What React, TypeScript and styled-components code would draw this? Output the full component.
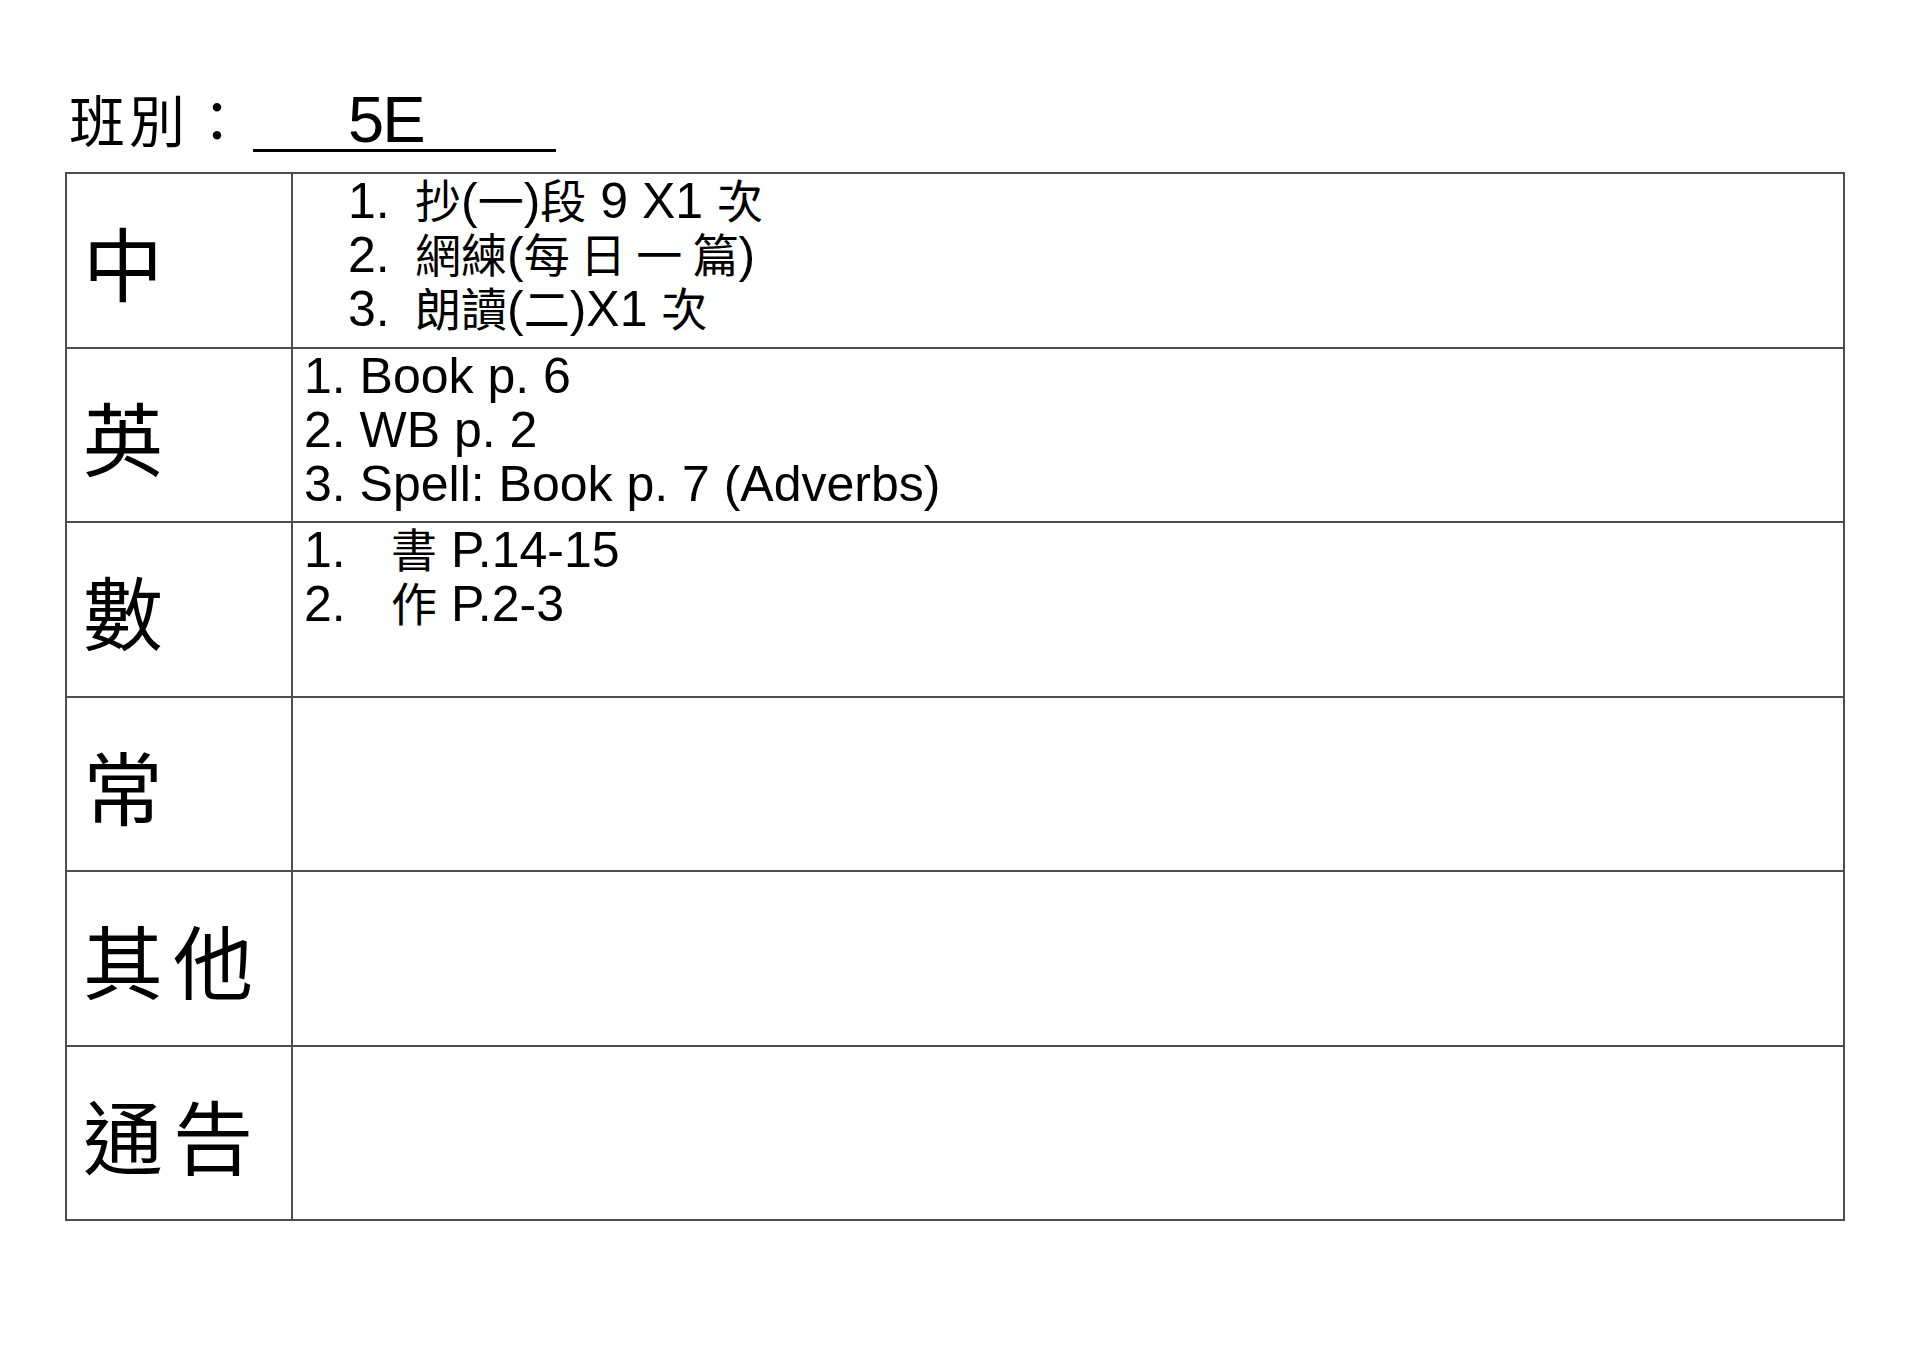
import React from "react";
import styled, { createGlobalStyle } from "styled-components";

const GlobalStyle = createGlobalStyle`
  html, body {
    margin: 0;
    padding: 0;
    background: #ffffff;
  }
  body {
    font-family: "Liberation Sans", "Noto Sans CJK TC", sans-serif;
    color: #000;
  }
  * { box-sizing: border-box; }
`;

const Page = styled.div`
  width: 1920px;
  min-height: 1358px;
  padding: 89px 0 0 65px;
  background: #fff;
`;

const Title = styled.div`
  display: flex;
  align-items: baseline;
  margin-left: 4px;
`;

const TitleLabel = styled.span`
  font-family: "Noto Sans CJK TC", "Noto Sans CJK SC", sans-serif;
  font-size: 56px;
  line-height: 57px;
  letter-spacing: 4px;
  font-weight: 400;
`;

const BlankField = styled.span`
  display: inline-block;
  width: 303px;
  margin-left: 4px;
  padding-left: 95px;
  border-bottom: 3px solid #000;
  font-family: "Liberation Sans", Arial, sans-serif;
  font-size: 65px;
  line-height: 58px;
  letter-spacing: -2px;
`;

const Sheet = styled.div`
  margin-top: 20px;
  width: 1780px;
  display: grid;
  grid-template-columns: 226px 1fr;
  grid-template-rows: repeat(6, 174.5px);
  border-top: 2px solid #4d4d4d;
  border-left: 2px solid #4d4d4d;
`;

const LabelCell = styled.div`
  display: flex;
  align-items: center;
  padding-left: 16px;
  border-right: 2px solid #4d4d4d;
  border-bottom: 2px solid #4d4d4d;
  font-family: "Noto Sans CJK TC", "Noto Sans CJK SC", sans-serif;
  font-size: 80px;
  line-height: 1;
  letter-spacing: 10px;
`;

const ContentCell = styled.div<{ $indent: number }>`
  padding-left: ${(p) => p.$indent}px;
  padding-top: 0;
  border-right: 2px solid #4d4d4d;
  border-bottom: 2px solid #4d4d4d;
`;

const Line = styled.div`
  font-family: "Liberation Sans", "Noto Sans CJK TC", sans-serif;
  font-size: 50px;
  line-height: 54px;
  white-space: pre;
`;

const Marker = styled.span<{ $w: number }>`
  display: inline-block;
  width: ${(p) => p.$w}px;
`;

const Han = styled.span`
  font-family: "Noto Sans CJK TC", sans-serif;
  font-size: 46px;
  line-height: 1;
`;

type Item = { marker?: string; text: React.ReactNode };

type Row = {
  label: string;
  indent: number;
  markerWidth: number;
  items: Item[];
};

const rows: Row[] = [
  {
    label: "中",
    indent: 55,
    markerWidth: 67,
    items: [
      { marker: "1.", text: <><Han>抄</Han>(<Han>一</Han>)<Han>段</Han> 9 X1 <Han>次</Han></> },
      { marker: "2.", text: <><Han>網練</Han>(<Han>每 日 一 篇</Han>)</> },
      { marker: "3.", text: <><Han>朗讀</Han>(<Han>二</Han>)X1 <Han>次</Han></> },
    ],
  },
  {
    label: "英",
    indent: 11,
    markerWidth: 0,
    items: [
      { text: "1. Book p. 6" },
      { text: "2. WB p. 2" },
      { text: "3. Spell: Book p. 7 (Adverbs)" },
    ],
  },
  {
    label: "數",
    indent: 11,
    markerWidth: 87,
    items: [
      { marker: "1.", text: <><Han>書</Han> P.14-15</> },
      { marker: "2.", text: <><Han>作</Han> P.2-3</> },
    ],
  },
  { label: "常", indent: 11, markerWidth: 0, items: [] },
  { label: "其他", indent: 11, markerWidth: 0, items: [] },
  { label: "通告", indent: 11, markerWidth: 0, items: [] },
];

export default function App() {
  return (
    <>
      <GlobalStyle />
      <Page>
        <Title>
          <TitleLabel>班別：</TitleLabel>
          <BlankField>5E</BlankField>
        </Title>
        <Sheet>
          {rows.map((row) => (
            <React.Fragment key={row.label}>
              <LabelCell>{row.label}</LabelCell>
              <ContentCell $indent={row.indent}>
                {row.items.map((item, i) => (
                  <Line key={i}>
                    {item.marker ? <Marker $w={row.markerWidth}>{item.marker}</Marker> : null}
                    {item.text}
                  </Line>
                ))}
              </ContentCell>
            </React.Fragment>
          ))}
        </Sheet>
      </Page>
    </>
  );
}
